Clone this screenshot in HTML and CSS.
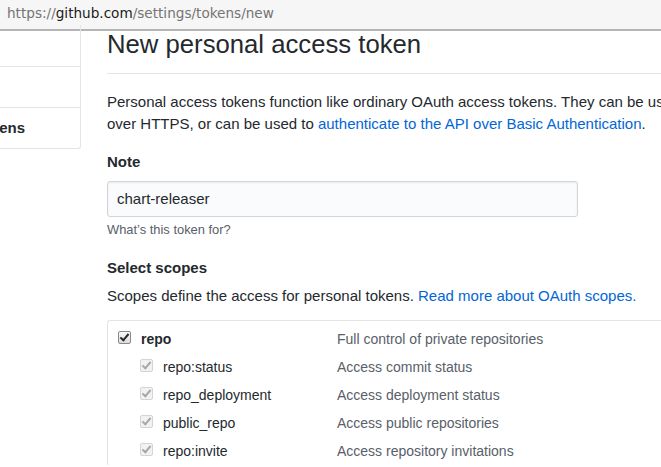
FILE: index.html
```html
<!DOCTYPE html>
<html lang="en">
<head>
<meta charset="utf-8">
<title>New personal access token</title>
<link rel="stylesheet" href="styles.css">
</head>
<body>
<div class="urlbar"><span class="url-muted">https://</span><span class="url-host">github.com</span><span class="url-muted">/settings/tokens/new</span></div>
<div class="page">
  <nav class="sidebar">
    <div class="side-item">GitHub Apps</div>
    <div class="side-item">OAuth Apps</div>
    <div class="side-item selected">Personal access tokens</div>
  </nav>
  <main class="main">
    <div class="subhead"><h2 class="subhead-heading">New personal access token</h2></div>
    <p class="intro">Personal access tokens function like ordinary OAuth access tokens. They can be used instead of a password for Git over HTTPS, or can be used to <a href="#">authenticate to the API over Basic Authentication</a>.</p>
    <div class="form-group">
      <label class="form-label">Note</label>
      <div class="input">chart-releaser</div>
      <p class="note">What’s this token for?</p>
    </div>
    <div class="form-group scopes-group">
      <label class="form-label">Select scopes</label>
      <p class="scopes-desc">Scopes define the access for personal tokens. <a href="#">Read more about OAuth scopes.</a></p>
      <div class="scopes">
        <div class="scope-row parent">
          <div class="scope-name"><span class="cb checked"></span><span class="name">repo</span></div>
          <div class="scope-desc">Full control of private repositories</div>
        </div>
        <div class="scope-row child">
          <div class="scope-name"><span class="cb disabled"></span><span class="name">repo:status</span></div>
          <div class="scope-desc">Access commit status</div>
        </div>
        <div class="scope-row child">
          <div class="scope-name"><span class="cb disabled"></span><span class="name">repo_deployment</span></div>
          <div class="scope-desc">Access deployment status</div>
        </div>
        <div class="scope-row child">
          <div class="scope-name"><span class="cb disabled"></span><span class="name">public_repo</span></div>
          <div class="scope-desc">Access public repositories</div>
        </div>
        <div class="scope-row child">
          <div class="scope-name"><span class="cb disabled"></span><span class="name">repo:invite</span></div>
          <div class="scope-desc">Access repository invitations</div>
        </div>
      </div>
    </div>
  </main>
</div>
</body>
</html>
```
FILE: styles.css
```css
html, body {
  margin: 0;
  padding: 0;
  background: #fff;
  overflow: hidden;
  width: 661px;
  height: 467px;
}
body {
  font-family: "Liberation Sans", Arial, sans-serif;
  color: #24292e;
  font-size: 15px;
}
a { color: #0366d6; text-decoration: none; }

.urlbar {
  height: 29px;
  background: #f6f6f6;
  border-bottom: 2px solid #b5b5b5;
  font-family: "DejaVu Sans", sans-serif;
  font-size: 13.6px;
  line-height: 27px;
  padding-left: 7px;
  white-space: nowrap;
  box-sizing: content-box;
}
.url-muted { color: #747474; }
.url-host { color: #1a1a1a; }

.page {
  display: flex;
  align-items: flex-start;
  margin-top: -6px;
}
.sidebar {
  flex: none;
  width: 241px;
  margin-left: -161px;
  border: 1px solid #e1e4e8;
  border-left: none;
  border-top: none;
  border-radius: 0 0 3px 0;
  overflow: hidden;
}
.side-item {
  height: 40px;
  line-height: 40px;
  border-top: 1px solid #e1e4e8;
  white-space: nowrap;
  padding-left: 16px;
  color: #0366d6;
}
.side-item:first-child { border-top: none; height: 41px; }
.side-item.selected {
  font-weight: bold;
  color: #24292e;
}
.main {
  flex: none;
  width: 800px;
  margin-left: 26px;
}
.subhead {
  border-bottom: 1px solid #e1e4e8;
  padding-bottom: 12px;
}
.subhead-heading {
  margin: 0;
  font-size: 25.7px;
  font-weight: normal;
  line-height: 33px;
  padding-top: 3px;
}
.intro {
  margin: 17px 0 0;
  line-height: 22px;
  width: 790px;
}
.form-group { margin-top: 16px; }
.form-label {
  display: block;
  font-weight: bold;
  line-height: 22px;
}
.input {
  margin-top: 8px;
  width: 471px;
  height: 36px;
  box-sizing: border-box;
  border: 1px solid #d1d5da;
  border-radius: 3px;
  background: #fafbfc;
  box-shadow: inset 0 1px 2px rgba(27,31,35,0.075);
  padding: 0 9px;
  line-height: 34px;
}
.note {
  margin: 4px 0 0;
  font-size: 12.9px;
  line-height: 18px;
  color: #586069;
}
.scopes-group { margin-top: 18px; }
.scopes-desc {
  margin: 6px 0 0;
  line-height: 22px;
}
.scopes {
  margin-top: 13px;
  border: 1px solid #e1e4e8;
  border-right: none;
  border-bottom: none;
  border-radius: 3px 0 0 0;
  padding: 4px 0 0 10px;
  font-size: 14px;
}
.scope-row {
  display: flex;
  height: 28px;
  align-items: center;
}
.scope-name {
  flex: none;
  width: 219px;
  display: flex;
  align-items: center;
}
.child .scope-name { padding-left: 22px; width: 197px; }
.parent .name { font-weight: bold; }
.scope-desc { color: #586069; }
.cb {
  flex: none;
  width: 13px;
  height: 13px;
  box-sizing: border-box;
  border-radius: 2px;
  margin-right: 10px;
  margin-top: -3px;
  position: relative;
}
.cb.checked {
  border: 1px solid #8a8a8a;
  background: linear-gradient(#fafafa, #dcdcdc);
}
.cb.disabled {
  border: 1px solid #d4d4d4;
  background: #f2f2f2;
}
.cb::after {
  content: "";
  position: absolute;
  left: 3px;
  top: 0px;
  width: 3px;
  height: 7px;
  border: solid #2a2a2a;
  border-width: 0 2px 2px 0;
  transform: rotate(40deg);
}
.cb.disabled::after { border-color: #a8a8a8; }
```
